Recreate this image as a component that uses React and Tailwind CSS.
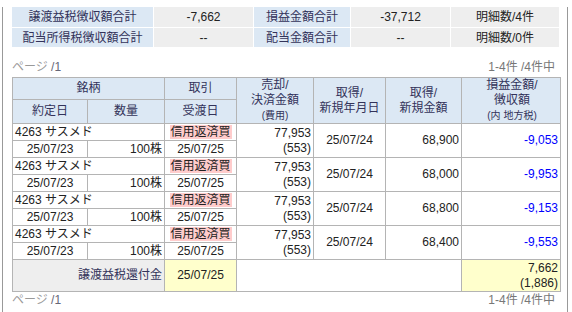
const FONT = { fontFamily: '"Liberation Sans", "Noto Sans CJK JP", sans-serif' };

const ROWS = [
  { acq: '68,900', pl: '-9,053' },
  { acq: '68,000', pl: '-9,953' },
  { acq: '68,800', pl: '-9,153' },
  { acq: '68,400', pl: '-9,553' },
];

const cell = 'border border-[#b4b4b4] px-[2px] leading-[15px]';
const head = 'border border-[#b4b4b4] bg-[#dce8f4] text-[#33335a] text-center font-normal leading-[15px]';

const Summary = () => (
  <div className="grid grid-cols-[141px_99px_96px_99px_108px] grid-rows-[20px_19px] gap-[1px] text-[12px] text-[#222] mt-[7px]">
    <div className="bg-[#dce8f4] text-[#33335a] flex items-center justify-center">譲渡益税徴収額合計</div>
    <div className="bg-[#eeeeee] flex items-center justify-center">-7,662</div>
    <div className="bg-[#dce8f4] text-[#33335a] flex items-center justify-center">損益金額合計</div>
    <div className="bg-[#eeeeee] flex items-center justify-center">-37,712</div>
    <div className="bg-[#eeeeee] flex items-center justify-center">明細数/4件</div>
    <div className="bg-[#dce8f4] text-[#33335a] flex items-center justify-center">配当所得税徴収額合計</div>
    <div className="bg-[#eeeeee] flex items-center justify-center">--</div>
    <div className="bg-[#dce8f4] text-[#33335a] flex items-center justify-center">配当金額合計</div>
    <div className="bg-[#eeeeee] flex items-center justify-center">--</div>
    <div className="bg-[#eeeeee] flex items-center justify-center">明細数/0件</div>
  </div>
);

const Pager = ({ className }) => (
  <div className={`flex justify-between items-center text-[12px] leading-[14px] pr-[5px] ${className}`}>
    <span className="text-[#999]">
      ページ <span className="text-[#667]">/1</span>
    </span>
    <span className="text-[#777]">1-4件 /4件中</span>
  </div>
);

export default function App() {
  return (
    <div className="w-[572px] h-[312px] bg-white overflow-hidden" style={FONT}>
      <div className="ml-[2px] w-[566px] h-[312px] border-l border-r border-[#999] pl-[9px]">
        <Summary />
        <Pager className="mt-[13px] w-[548px]" />
        <table className="mt-[3px] border-collapse text-[12px] text-[#222] table-fixed w-[548px]">
          <colgroup>
            <col className="w-[75px]" />
            <col className="w-[77px]" />
            <col className="w-[72px]" />
            <col className="w-[77px]" />
            <col className="w-[72px]" />
            <col className="w-[76px]" />
            <col className="w-[99px]" />
          </colgroup>
          <thead>
            <tr className="h-[21px]">
              <th colSpan={2} className={head}>銘柄</th>
              <th className={head}>取引</th>
              <th rowSpan={2} className={head}>
                売却/<br />決済金額<br />
                <span className="text-[10px] leading-[12px]">(費用)</span>
              </th>
              <th rowSpan={2} className={head}>取得/<br />新規年月日</th>
              <th rowSpan={2} className={head}>取得/<br />新規金額</th>
              <th rowSpan={2} className={`${head} !text-right pr-[4px]`}>
                <div className="text-center pl-[6px]">
                  損益金額/<br />徴収額<br />
                  <span className="text-[10px] leading-[12px]">(内 地方税)</span>
                </div>
              </th>
            </tr>
            <tr className="h-[23px]">
              <th className={head}>約定日</th>
              <th className={head}>数量</th>
              <th className={head}>受渡日</th>
            </tr>
          </thead>
          <tbody>
            {ROWS.map((r, i) => [
              <tr key={`a${i}`} className="h-[17px]">
                <td colSpan={2} className={`${cell} text-left`}>4263 サスメド</td>
                <td className={`${cell} text-center`}>
                  <span className="bg-[#ffcccc] px-[1px]">信用返済買</span>
                </td>
                <td rowSpan={2} className={`${cell} text-right`}>77,953<br />(553)</td>
                <td rowSpan={2} className={`${cell} text-center`}>25/07/24</td>
                <td rowSpan={2} className={`${cell} text-right`}>{r.acq}</td>
                <td rowSpan={2} className={`${cell} text-right text-[#0000ff]`}>{r.pl}</td>
              </tr>,
              <tr key={`b${i}`} className="h-[17px]">
                <td className={`${cell} text-center`}>25/07/23</td>
                <td className={`${cell} text-right`}>100株</td>
                <td className={`${cell} text-center`}>25/07/25</td>
              </tr>,
            ])}
            <tr className="h-[32px]">
              <td colSpan={2} className={`${cell} bg-[#eeeeee] text-right text-[#33335a]`}>譲渡益税還付金</td>
              <td className={`${cell} bg-[#ffffcc] text-center`}>25/07/25</td>
              <td colSpan={3} className={cell}></td>
              <td className={`${cell} bg-[#ffffcc] text-right`}>7,662<br />(1,886)</td>
            </tr>
          </tbody>
        </table>
        <Pager className="mt-[1px] w-[548px]" />
      </div>
    </div>
  );
}
